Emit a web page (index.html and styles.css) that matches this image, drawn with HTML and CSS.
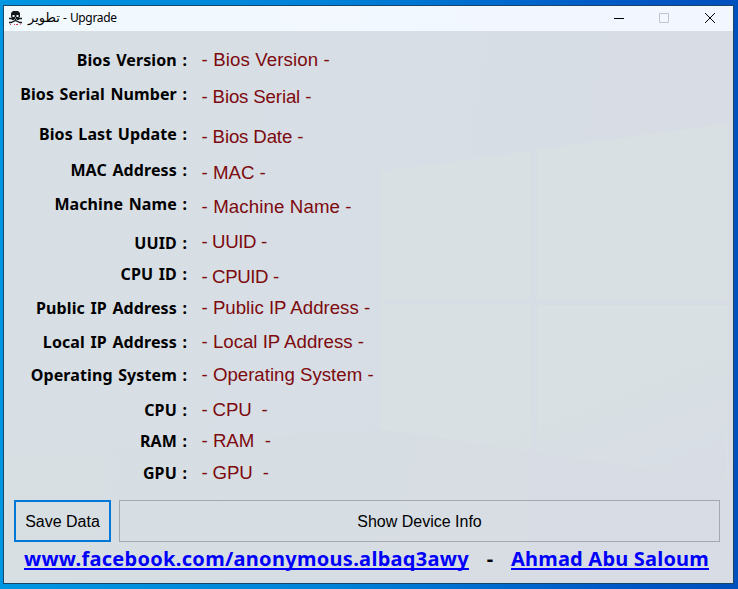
FILE: index.html
```html
<!DOCTYPE html>
<html lang="en">
<head>
<meta charset="utf-8">
<title>تطوير - Upgrade</title>
<link rel="stylesheet" href="styles.css">
</head>
<body>
<main class="window">
  <header class="titlebar">
    <svg class="skull" viewBox="0 0 13 14" aria-hidden="true">
      <path fill="#15191c" d="M4 0h5l2 2v4l-1 1v2H3V7L2 6V2z"/>
      <path fill="none" stroke="#15191c" stroke-width="1.300" d="M0 7.500h2l9 4h2M13 7.500h-2l-9 4H0"/>
      <path fill="#f3f9ff" d="M3.500 4h2v2h-2zM7.500 4h2v2h-2zM6 6.500h1v1H6zM5 8h.6v1H5zM7.400 8H8v1h-.6z"/>
      <path fill="#d8405a" d="M1 13h1v1H1zM5 13h1v1H5zM7 13h2v1H7zM11 12.500h1v1h-1z"/>
    </svg>
    <h1 class="title"><span class="arabic">تطوير</span> - Upgrade</h1>
    <div class="controls">
      <svg viewBox="0 0 10 10" stroke="#000"><path d="M0 5.500h10"/></svg>
      <svg viewBox="0 0 10 10" stroke="#bfc5cd" fill="none"><path d="M.5.5h9v9h-9z"/></svg>
      <svg class="close" viewBox="0 0 10 10" stroke="#000" fill="none"><path d="M0 0l10 10M10 0L0 10"/></svg>
    </div>
  </header>
  <div class="client">
    <svg class="wallpaper" viewBox="0 0 729 552" aria-hidden="true">
      <defs>
        <linearGradient id="pane" gradientUnits="userSpaceOnUse" x1="500" y1="100" x2="640" y2="460">
          <stop offset="0" stop-color="#d8e0e3"/>
          <stop offset=".7" stop-color="#d8e0e3"/>
          <stop offset="1" stop-color="#d8dde5"/>
        </linearGradient>
      </defs>
      <path fill="#d7dfe2" d="M0 425l377-27 149 21v133H0z" opacity=".4"/>
      <g fill="url(#pane)" stroke="#d9e1e3" stroke-width="1">
        <path d="M377 141l149-20v148H377zM534 119l189-26v176H534z"/>
        <path d="M377 275h149v144l-149-22zM534 275h189v172l-189-26z"/>
      </g>
    </svg>
    <section class="info">
      <div class="labels">
        <span>Bios Version :</span><span>Bios Serial Number :</span><span>Bios Last Update :</span><span>MAC Address :</span><span>Machine Name :</span><span>UUID :</span><span>CPU ID :</span><span>Public IP Address :</span><span>Local IP Address :</span><span>Operating System :</span><span>CPU :</span><span>RAM :</span><span>GPU :</span>
      </div>
      <div class="values">
        <span class="wide">- Bios Version -</span><span class="tight">- Bios Serial -</span><span class="tight">- Bios Date -</span><span>- MAC -</span><span class="wide">- Machine Name -</span><span class="caps">- UUID -</span><span class="caps">- CPUID -</span><span>- Public IP Address -</span><span>- Local IP Address -</span><span>- Operating System -</span><span class="tight">- CPU  -</span><span>- RAM  -</span><span class="tight">- GPU  -</span>
      </div>
    </section>
    <div class="actions">
      <button class="btn btn-save">Save Data</button>
      <button class="btn">Show Device Info</button>
    </div>
    <footer class="links">
      <a class="site" href="#">www.facebook.com/anonymous.albaq3awy</a>
      <span class="dash">-</span>
      <a class="author" href="#">Ahmad Abu Saloum</a>
    </footer>
  </div>
</main>
</body>
</html>
```
FILE: styles.css
```css
* { box-sizing: border-box; }
body {
  margin: 0;
  width: 738px;
  height: 589px;
  padding: 5px 4px 5px 3px;
  overflow: hidden;
  background: linear-gradient(90deg, #0096e2, #0082d8 45%, #0057c6 85%, #0050bd);
}
.window {
  width: 731px;
  height: 579px;
  border: 1px solid #174668;
  display: flex;
  flex-direction: column;
}
.titlebar {
  height: 25px;
  display: flex;
  align-items: center;
  padding-left: 5px;
  background: linear-gradient(90deg, #f2fafe, #f2f6ff);
}
.skull { width: 13px; height: 14px; margin-top: -2px; }
.title {
  margin: -2px 0 0 6px;
  font: 400 12px/16px "Noto Sans", "Open Sans", sans-serif;
  letter-spacing: -0.35px;
  white-space: pre;
}
.arabic { letter-spacing: 0; font-family: "DejaVu Sans", sans-serif; font-size: 13px; }
.controls { margin: -2px 0 0 auto; display: flex; gap: 35px; padding-right: 18px; }
.controls svg { width: 10px; height: 10px; }
.controls .close { margin-left: 1px; }
.client {
  position: relative;
  height: 552px;
  background: linear-gradient(100deg, #d7dfe4, #d7dee5 45%, #d8dce4);
}
.wallpaper { position: absolute; inset: 0; width: 729px; height: 552px; }
.info { position: relative; display: flex; height: 469px; }
.labels, .values {
  display: grid;
  align-items: end;
  align-content: start;
  white-space: pre;
}
.labels {
  width: 183px;
  justify-items: end;
  grid-template-rows: 39px 34px 40px 36px 34px 39px 31px 34px 34px 33px 35px 31px 32px;
  font: 700 16px/20px "Noto Sans", sans-serif;
  letter-spacing: 0.1px;
  word-spacing: 1.3px;
  color: #000;
}
.values {
  margin-left: 14.500px;
  grid-template-rows: 39px 37px 40px 36px 34px 35px 35px 31px 34px 33px 35px 31px 32px;
  font: 400 18.67px/20px "Liberation Sans", sans-serif;
  color: #7d0a0e;
}
.wide { letter-spacing: 0.12px; }
.tight { letter-spacing: -0.15px; }
.caps { letter-spacing: -0.4px; }
.actions { position: relative; display: flex; gap: 8px; padding: 0 13px 0 10px; }
.btn {
  flex: 1;
  height: 42px;
  padding: 2px 0 0;
  border: 1px solid #a3a9af;
  background: transparent;
  color: #000;
  font: 400 16px/20px "Liberation Sans", sans-serif;
}
.btn-save { flex: 0 0 97px; border: 2px solid #0078d7; }
.links {
  position: relative;
  display: flex;
  padding: 5px 24px 0 20px;
  justify-content: space-between;
  font: 700 20px/24px "Noto Sans", sans-serif;
}
.links a { color: #0000fa; text-decoration-thickness: 2px; text-underline-offset: 2px; text-decoration-skip-ink: none; }
.site { letter-spacing: 0.3px; }
.author { letter-spacing: 0.2px; }
```
